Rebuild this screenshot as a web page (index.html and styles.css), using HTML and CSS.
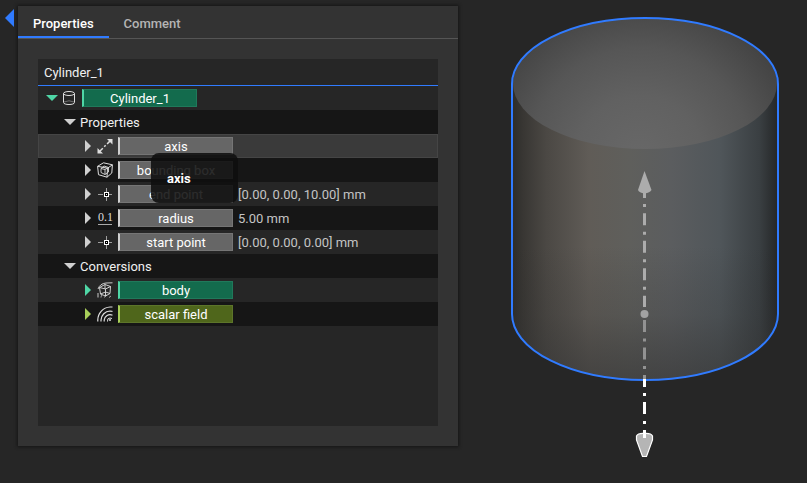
FILE: index.html
```html
<!DOCTYPE html>
<html lang="en">
<head>
<meta charset="utf-8">
<meta name="viewport" content="width=device-width, initial-scale=1">
<title>Cylinder_1</title>
<link rel="stylesheet" href="styles.css">
</head>
<body>
<svg class="symbols" aria-hidden="true">
  <symbol id="right" viewBox="0 0 6 12"><path d="M0 0 6 6 0 12Z" fill="currentColor"/></symbol>
  <symbol id="down" viewBox="0 0 12 6"><path d="M0 0H12L6 6Z" fill="currentColor"/></symbol>
  <symbol id="cylinder" viewBox="0 0 16 16">
    <g fill="none" stroke="currentColor"><ellipse cx="8" cy="3.5" rx="5.5" ry="2"/><path d="M2.5 3.5V12.500C2.500 15.200 13.500 15.200 13.500 12.500V3.500"/></g>
    <path d="M3 12Q8 9.500 13 12" fill="none" stroke="currentColor" opacity=".4"/>
  </symbol>
  <symbol id="axis" viewBox="0 0 16 16">
    <path d="M3 13 13 3" stroke="currentColor" stroke-width="1.500" stroke-dasharray="4 2 2 2"/>
    <path d="M10 1H15.500V6.500ZM.5 10V15.500H6Z" fill="currentColor"/>
  </symbol>
  <symbol id="box" viewBox="0 0 16 16">
    <g fill="none" stroke="currentColor"><path d="M.6 4.300 6.500.8 15.400 2.800 14.800 11 10 15.200 1.500 12.700ZM.6 4.300 10.500 6.200 15.400 2.800M10.500 6.200 10 15.200"/><path d="M4 6.500 7 4 11.500 5.500V10L8 12.500 4 10.500ZM4 6.500 8 7.500 11.500 5.500M8 7.500V12.500" stroke-width=".9"/></g>
  </symbol>
  <symbol id="point" viewBox="0 0 16 16">
    <path d="M1 8.500H6M12 8.500H15M9.500 2V6M9.500 11V15" stroke="currentColor" opacity=".65"/>
    <rect x="7.500" y="6.500" width="4" height="4" fill="#000" stroke="#fff"/>
    <rect x="9" y="8" width="1" height="1" fill="#fff"/>
  </symbol>
  <symbol id="body" viewBox="0 0 16 16">
    <g fill="none" stroke="currentColor">
      <path d="M1 15.500V11M1 7Q3 1.500 9 1L15.500.8M2.500 5.500 8 2.500 13.500 4.500 13 11.500 8.500 14 3.500 12ZM2.500 5.500 8.500 7 13.500 4.500M8.500 7V14M8 2.500V7M3.500 12 8.500 10 13 11.500" stroke-width=".9"/>
      <path d="M4 15.500Q4 14 5 13M7.500 15.500Q8 13.500 10 13M12 15.500 14 14" opacity=".7"/>
    </g>
  </symbol>
  <symbol id="field" viewBox="0 0 16 16">
    <g fill="none" stroke="currentColor" stroke-width="1.200">
      <path d="M.8 15.500V14A13 13 0 0 1 13 1H15.500M4 15.500V14A9.500 9.500 0 0 1 13 5Q15 5 15.500 5.500M7.200 15.500V14A5.800 5.800 0 0 1 15.500 9.200"/>
      <path d="M10.500 15.500Q10 12 13 12L15 12.500" stroke-width="1"/>
    </g>
    <circle cx="13" cy="14" r="1" fill="currentColor"/>
  </symbol>
</svg>
<main class="app">
  <button class="collapse" aria-label="Collapse panel"><svg viewBox="0 0 9 18"><path d="M9 0V18L0 9Z" fill="currentColor"/></svg></button>
  <section class="panel">
    <nav class="tabs" aria-label="Panel tabs">
      <button class="tab tab-active">Properties</button>
      <button class="tab">Comment</button>
    </nav>
    <div class="tree">
      <input class="name" type="text" value="Cylinder_1" aria-label="Name">
      <div class="row root mint"><button class="toggle" aria-label="Collapse Cylinder_1"><svg class="down"><use href="#down"/></svg></button><svg class="icon"><use href="#cylinder"/></svg><span class="chip">Cylinder_1</span></div>
      <div class="row group"><button class="toggle" aria-label="Collapse Properties"><svg class="down"><use href="#down"/></svg></button><span class="label">Properties</span></div>
      <div class="row leaf selected"><button class="toggle" aria-label="Expand axis"><svg class="right"><use href="#right"/></svg></button><svg class="icon"><use href="#axis"/></svg><span class="chip">axis<strong class="drag">axis</strong></span></div>
      <div class="row leaf"><button class="toggle" aria-label="Expand bounding box"><svg class="right"><use href="#right"/></svg></button><svg class="icon"><use href="#box"/></svg><span class="chip">bounding box</span></div>
      <div class="row leaf"><button class="toggle" aria-label="Expand end point"><svg class="right"><use href="#right"/></svg></button><svg class="icon"><use href="#point"/></svg><span class="chip">end point</span><span class="value">[0.00, 0.00, 10.00] mm</span></div>
      <div class="row leaf"><button class="toggle" aria-label="Expand radius"><svg class="right"><use href="#right"/></svg></button><span class="icon"><span class="number">0.1</span></span><span class="chip">radius</span><span class="value">5.00 mm</span></div>
      <div class="row leaf"><button class="toggle" aria-label="Expand start point"><svg class="right"><use href="#right"/></svg></button><svg class="icon"><use href="#point"/></svg><span class="chip">start point</span><span class="value">[0.00, 0.00, 0.00] mm</span></div>
      <div class="row group"><button class="toggle" aria-label="Collapse Conversions"><svg class="down"><use href="#down"/></svg></button><span class="label">Conversions</span></div>
      <div class="row leaf mint"><button class="toggle" aria-label="Expand body"><svg class="right"><use href="#right"/></svg></button><svg class="icon"><use href="#body"/></svg><span class="chip">body</span></div>
      <div class="row leaf olive"><button class="toggle" aria-label="Expand scalar field"><svg class="right"><use href="#right"/></svg></button><svg class="icon"><use href="#field"/></svg><span class="chip">scalar field</span></div>
    </div>
  </section>
  <section class="viewer">
    <svg class="scene" viewBox="458 0 349 483" role="img" aria-label="Cylinder with its axis">
      <defs>
        <linearGradient id="side">
          <stop offset="0" stop-color="#2c2c2a"/><stop offset=".04" stop-color="#383633"/><stop offset=".13" stop-color="#4b4844"/><stop offset=".29" stop-color="#605c57"/><stop offset=".44" stop-color="#5f5f5c"/><stop offset=".6" stop-color="#5b5d5f"/><stop offset=".78" stop-color="#50565a"/><stop offset=".93" stop-color="#3a3f42"/><stop offset="1" stop-color="#242627"/>
        </linearGradient>
        <radialGradient id="top" gradientUnits="userSpaceOnUse" cx="640" cy="160" r="160">
          <stop offset="0" stop-color="#686868"/><stop offset=".4" stop-color="#616161"/><stop offset=".7" stop-color="#565656"/><stop offset="1" stop-color="#444"/>
        </radialGradient>
        <linearGradient id="shade" x1="0" y1="0" x2="0" y2="1">
          <stop offset=".55" stop-color="#282828" stop-opacity="0"/><stop offset=".78" stop-color="#303030" stop-opacity=".2"/><stop offset="1" stop-color="#353535" stop-opacity=".65"/>
        </linearGradient>
      </defs>
      <path d="M512 83V314A133 66 0 0 0 778 314V83Z" fill="url(#side)"/>
      <path d="M512 83V314A133 66 0 0 0 778 314V83Z" fill="url(#shade)"/>
      <ellipse cx="645" cy="83.500" rx="132" ry="65.500" fill="url(#top)"/>
      <path d="M512 84A133 66 0 0 1 778 84V314A133 66 0 0 1 512 314Z" fill="none" stroke="#307bff" stroke-width="2"/>
      <path d="M644.500 192V307" stroke="#acacac" stroke-width="3" stroke-dasharray="6 6 3 6.300 12 6.500 3 6 12 6.500 3 6 12 6.500 3 6 12 20"/>
      <path d="M644.500 320V379" stroke="#929292" stroke-width="3" stroke-dasharray="12 6.500 3 6"/>
      <path d="M644.500 379V387M644.500 393V396M644.500 402V414M644.500 421V424" stroke="#fff" stroke-width="3"/>
      <path d="M644.500 171 651.500 190Q650 192.500 644.500 193.500 639 192.500 638 190Z" fill="#acacac"/>
      <circle cx="644.500" cy="314" r="4" fill="#a2a2a2"/>
      <path d="M636.500 436Q638 433 644.500 433.500 651 433 652.500 436V440L646.500 456.500H642.500L636.500 440Z" fill="#b5b5b5" stroke="#fff" stroke-width="1.200"/>
      <path d="M644.500 430V438" stroke="#fff" stroke-width="3"/>
    </svg>
  </section>
</main>
</body>
</html>
```
FILE: styles.css
```css
* { box-sizing: border-box; }

body {
  margin: 0;
  background: #262626;
  color: #f0f0f0;
  font: 13px/24px Roboto, "Liberation Sans", sans-serif;
}

button, input { font: inherit; color: inherit; border: 0; background: none; padding: 0; }
svg { display: block; }
.symbols { position: absolute; width: 0; height: 0; }

.app { display: flex; min-height: 100vh; }

.collapse { flex: 0 0 18px; align-self: flex-start; padding: 9px 4px 0 5px; color: #307bff; }
.collapse svg { width: 9px; height: 18px; }

.panel {
  flex: 0 1 440px;
  display: flex;
  flex-direction: column;
  margin: 6px 0 37px;
  padding-bottom: 20px;
  background: #333;
  box-shadow: 0 0 3px 1px #161616;
}

.tabs { display: flex; height: 33px; border-bottom: 1px solid #555; }
.tab { padding: 6px 15px 0; font-weight: 500; color: #b4b4b4; border-bottom: 2px solid transparent; }
.tab-active { color: #fff; border-color: #307bff; }

.tree { flex: 1; margin: 20px 20px 0; background: #262626; }
.name { display: block; width: 100%; height: 27px; padding: 0 6px; border-bottom: 1px solid #307bff; outline: 0; border-radius: 0; }

.row { display: flex; align-items: center; height: 24px; border: 1px solid transparent; }
.row:nth-child(odd) { background: #161616; }
.row.selected { background: #3a3a3a; border-color: #454545; }
.root { padding-left: 7px; }
.group { padding-left: 25px; }
.leaf { padding-left: 43px; }

.toggle { flex: 0 0 15px; height: 22px; color: #d0d0d0; }
.leaf .toggle { padding-left: 3px; }
.label { padding: 2px 0 0 1px; }
.down { width: 12px; height: 6px; }
.right { width: 6px; height: 12px; }
.icon { flex: 0 0 16px; height: 16px; margin-right: 5px; color: #dedede; }
.number { display: block; width: 14px; margin-left: 1px; font: 12px/14px "Liberation Serif", serif; border-bottom: 1px solid #aaa; }

.chip {
  position: relative;
  flex: 0 0 115px;
  height: 18px;
  line-height: 18px;
  text-align: center;
  color: #fff;
  background: #666;
  border: 1px solid #757575;
  border-left: 2px solid #d0d0d0;
}
.value { margin-left: 5px; padding-top: 2px; color: #c4c4c4; }

.mint .toggle { color: #4fd6a6; }
.mint .chip { background: #136b4d; border-color: #20795b; border-left-color: #4fd6a6; }
.olive .toggle { color: #a8cf5a; }
.olive .chip { background: #4f661b; border-color: #5d752a; border-left-color: #a8cf5a; }

.drag {
  position: absolute;
  z-index: 1;
  top: 15px;
  left: 31px;
  width: 87px;
  padding: 14px 16px 12px;
  border-radius: 8px;
  line-height: 24px;
  text-align: left;
  font-weight: 700;
  background: rgba(15, 15, 15, .88);
}

.viewer { flex: 1 1 349px; min-width: 0; }
.scene { width: 100%; height: 100vh; }
```
